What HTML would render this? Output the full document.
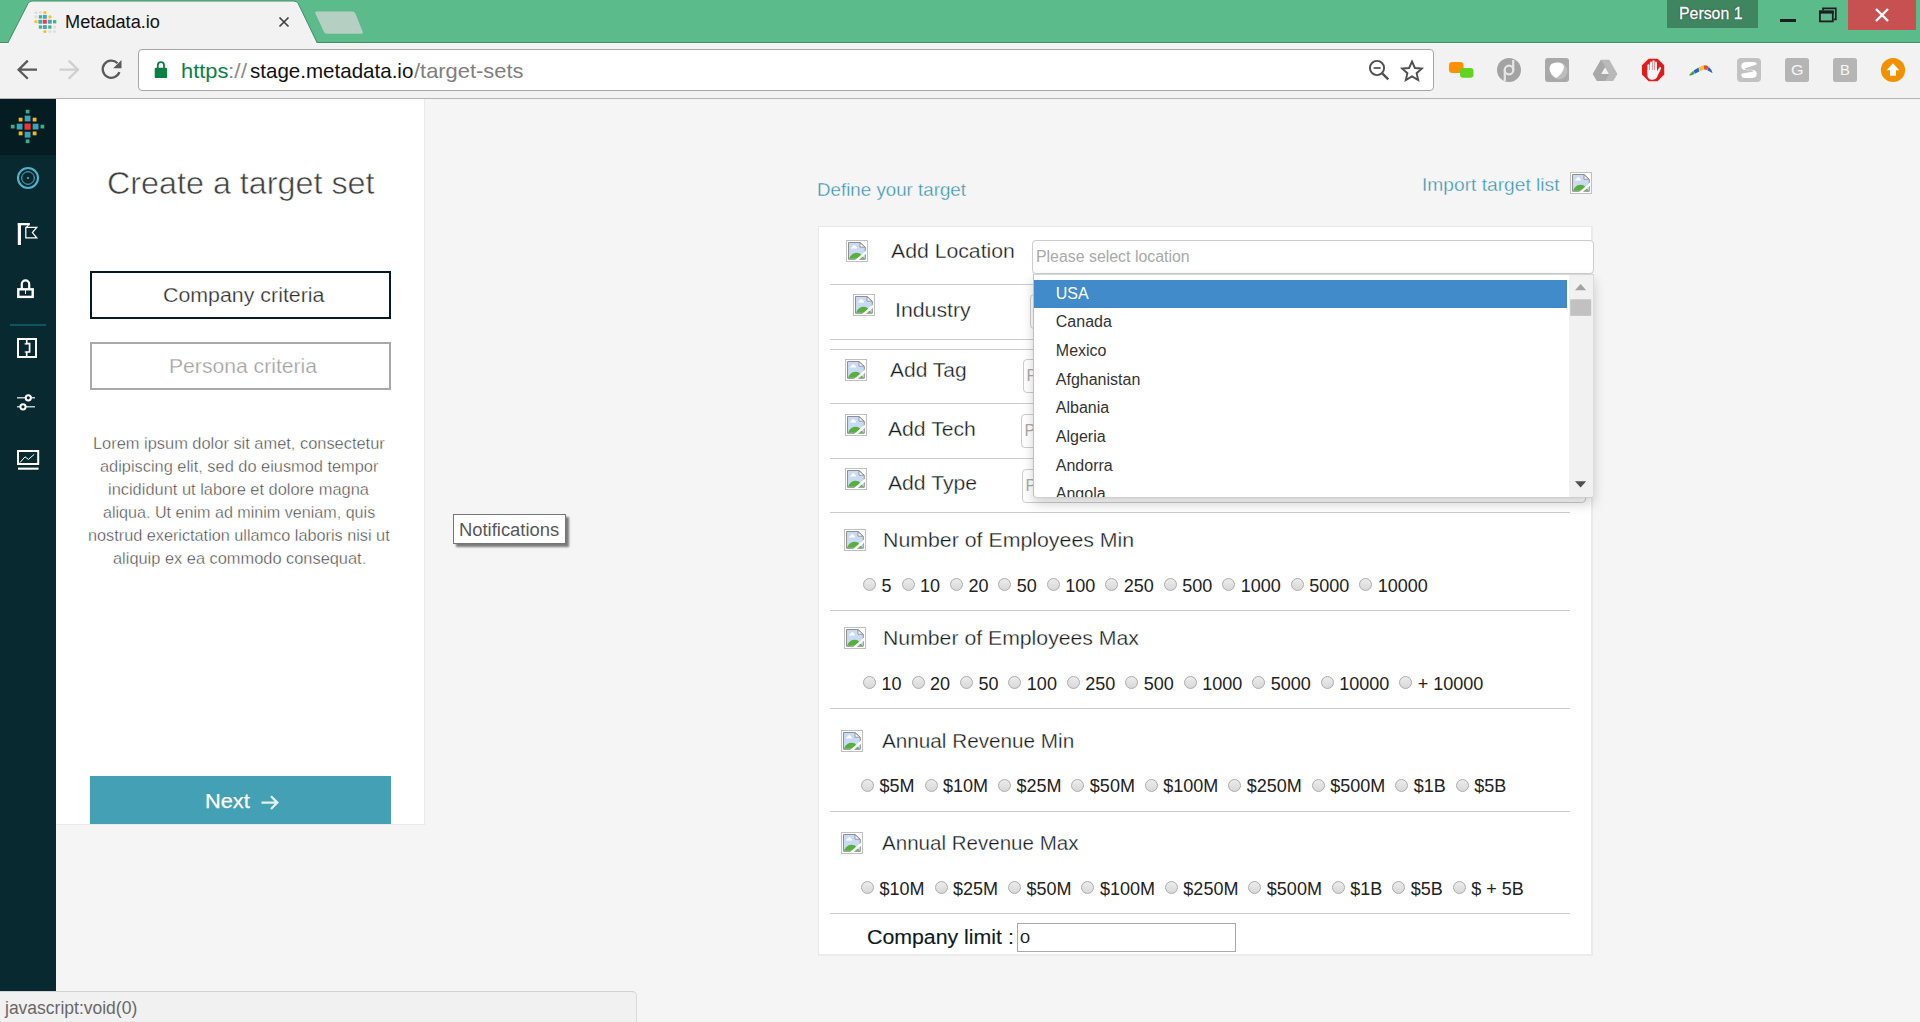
<!DOCTYPE html>
<html lang="en"><head><meta charset="utf-8"><title>Metadata.io</title>
<style>
html,body{margin:0;padding:0;overflow:hidden}
body{width:1920px;height:1022px;position:relative;overflow:hidden;background:#f5f5f5;font-family:"Liberation Sans",sans-serif;}
.a{position:absolute}
.t{position:absolute;white-space:nowrap;line-height:1;display:block;transform-origin:0 0}
svg{position:absolute;overflow:visible}
/* chrome */
#tabbar{left:0;top:0;width:1920px;height:43px;background:#5cbb8b}
#toolbar{left:0;top:43px;width:1920px;height:55px;background:#f2f2f2}
#tbline{left:0;top:98px;width:1920px;height:1px;background:#b4b4b4}
#omni{left:138px;top:49px;width:1294px;height:40px;border:1px solid #a6a6a6;border-radius:4px;background:#fff}
/* page */
#side{left:0;top:99px;width:56px;height:893px;background:#08292f}
#logo{left:0;top:99px;width:56px;height:56px;background:#051d22}
#panel{left:56px;top:99px;width:368px;height:725px;background:#fff;border-right:1px solid #e9e9e9;border-bottom:1px solid #e9e9e9}
.btn{left:90px;width:297px;height:44px;border:2px solid #041c21;background:#fff}
#card{left:818px;top:226px;width:772px;height:727px;background:#fff;border:1px solid #e8e8e8;border-right:2px solid #ebebeb;border-bottom:2px solid #ebebeb}
.hr{left:830px;width:740px;height:1px;background:#cbcbcb}
.bi{width:20px;height:20px;border:1px solid #c0c0c0;background:#fff}
.sel{height:32px;border:1px solid #ccc;border-radius:4px;background:#fff}
.rad{width:11px;height:11px;border:1px solid #acacac;border-radius:50%;background:linear-gradient(#ececec,#d8d8d8)}
.rl{position:absolute;white-space:nowrap;line-height:1;font-size:18px;color:#222}
.dd{left:1034px;top:274px;width:1558px}
.it{position:absolute;left:21.8px;white-space:nowrap;font-size:16px;line-height:1;color:#333}

</style></head>
<body>
<div class="a" id="tabbar"></div>
<div class="a" style="left:0;top:42px;width:1920px;height:1px;background:#3f8f66"></div>
<div class="a" id="toolbar"></div>
<div class="a" style="left:0;top:43px;width:1920px;height:1px;background:#fafafa"></div>
<div class="a" id="tbline"></div>
<svg style="left:0;top:0" width="400" height="44" viewBox="0 0 400 44">
<path d="M7.5 44 L28 3.5 Q29.5 1 32 1 L294 1 Q296.8 1 298.2 3.5 L317.6 44 Z" fill="#f2f2f2"/>
<path d="M7.8 43 L28 3.5 Q29.5 1 32 1 L294 1 Q296.8 1 298.2 3.5 L317.3 43" fill="none" stroke="#3f8f66" stroke-width="1"/>
<path d="M316.5 11.5 L352.5 11.5 Q354.5 11.5 355.3 13.3 L362.8 32 Q363.3 33.8 361.5 33.8 L326.5 33.8 Q324.8 33.8 324 32 L315.3 13.3 Q314.7 11.5 316.5 11.5 Z" fill="#b6cfc3"/>
<path d="M279.5 17.5 L288.5 26.5 M288.5 17.5 L279.5 26.5" stroke="#404040" stroke-width="1.7" fill="none"/>
</svg>
<svg style="left:0;top:0" width="60" height="40"><circle cx="35.9" cy="12.5" r="1.6" fill="#dedede"/><circle cx="40.4" cy="12.5" r="1.6" fill="#dedede"/><circle cx="44.9" cy="12.5" r="1.6" fill="#fdc010"/><circle cx="35.9" cy="16.9" r="1.6" fill="#dedede"/><rect x="38.8" y="15.2" width="3.3" height="3.3" fill="#3fb488"/><rect x="42.9" y="14.9" width="3.9" height="3.9" fill="#46a6c0"/><circle cx="49.9" cy="16.9" r="1.6" fill="#fdc010"/><circle cx="35.9" cy="21.7" r="1.6" fill="#fdc010"/><rect x="38.4" y="19.8" width="3.9" height="3.9" fill="#46a6c0"/><rect x="42.9" y="19.8" width="3.9" height="3.9" fill="#f73438"/><rect x="47.9" y="19.8" width="3.9" height="3.9" fill="#46a6c0"/><rect x="53.0" y="20.1" width="3.3" height="3.3" fill="#3fb488"/><rect x="38.8" y="25.4" width="3.3" height="3.3" fill="#3fb488"/><rect x="42.9" y="25.1" width="3.9" height="3.9" fill="#46a6c0"/><rect x="48.2" y="25.4" width="3.3" height="3.3" fill="#3fb488"/><circle cx="54.6" cy="27.1" r="1.6" fill="#dedede"/><circle cx="44.9" cy="31.5" r="1.6" fill="#fdc010"/><circle cx="49.9" cy="31.5" r="1.6" fill="#dedede"/><circle cx="54.6" cy="31.5" r="1.6" fill="#dedede"/></svg>
<span class="t" style="left:65.48px;top:13.00px;font-size:18px;color:#111;transform:scaleX(1.0095);">Metadata.io</span>
<div class="a" style="left:1667px;top:0;width:91px;height:28px;background:#3f8560"></div>
<span class="t" style="left:1679.06px;top:5.50px;font-size:16px;color:#fff;transform:scaleX(0.9913);-webkit-text-stroke:0.3px #fff;text-shadow:0 0 2px rgba(0,0,0,.55),0 0 1px rgba(0,0,0,.5);">Person 1</span>
<div class="a" style="left:1780px;top:19px;width:16px;height:3px;background:#1e1e1e"></div>
<svg style="left:1810px;top:0" width="40" height="30" viewBox="1810 0 40 30">
<path d="M1823 10.6 V8.3 H1835.8 V19.4 H1833.7" fill="none" stroke="#1e1e1e" stroke-width="1.7"/>
<rect x="1819.9" y="11.5" width="12.9" height="9.9" fill="none" stroke="#1e1e1e" stroke-width="1.8"/>
<rect x="1819" y="10.6" width="14.7" height="3" fill="#1e1e1e"/>
</svg>
<div class="a" style="left:1848px;top:0;width:68px;height:30px;background:#c75050"></div>
<svg style="left:1848px;top:0" width="68" height="30"><path d="M28 9 L40 21 M40 9 L28 21" stroke="#fff" stroke-width="2.4" fill="none"/></svg>
<svg style="left:0;top:43px" width="140" height="55" viewBox="0 43 140 55">
<path d="M37 69.7 H19 M27.8 60.6 L18.6 69.7 L27.8 78.8" fill="none" stroke="#5a5a5a" stroke-width="2.3"/>
<path d="M59.5 69.7 H77.5 M68.7 60.6 L77.9 69.7 L68.7 78.8" fill="none" stroke="#cfcfcf" stroke-width="2.3"/>
<path d="M117.5 63.2 A8.6 8.6 0 1 0 119.4 72.2" fill="none" stroke="#5a5a5a" stroke-width="2.3"/>
<path d="M121.5 60 V68.3 H113.2 Z" fill="#5a5a5a"/>
</svg>
<div class="a" id="omni"></div>
<svg style="left:150px;top:58px" width="24" height="24" viewBox="150 58 24 24">
<path d="M157.8 68 V65.3 A3.1 3.1 0 0 1 164 65.3 V68" fill="none" stroke="#0b8043" stroke-width="1.8"/>
<rect x="154.7" y="67.7" width="12.4" height="10.4" rx="1.2" fill="#0b8043"/>
</svg>
<span class="t" style="left:181.38px;top:60.00px;font-size:21px;color:#0b8043;transform:scaleX(1.0411);">https</span>
<span class="t" style="left:227.82px;top:60.00px;font-size:21px;color:#8c8c8c;transform:scaleX(1.0857);">://</span>
<span class="t" style="left:250.28px;top:60.00px;font-size:21px;color:#111;transform:scaleX(0.9785);">stage.metadata.io</span>
<span class="t" style="left:413.75px;top:60.00px;font-size:21px;color:#808080;transform:scaleX(1.0418);">/target-sets</span>
<svg style="left:1360px;top:52px" width="70" height="36" viewBox="1360 52 70 36">
<circle cx="1377" cy="68" r="7.1" fill="none" stroke="#505050" stroke-width="1.9"/>
<path d="M1373.6 68 H1380.6" stroke="#505050" stroke-width="1.7"/>
<path d="M1382.3 73.3 L1388.3 79.3" stroke="#505050" stroke-width="2.4"/>
<path d="M1412 61.5 L1414.9 68 L1421.8 68.6 L1416.6 73.2 L1418.2 80 L1412 76.4 L1405.8 80 L1407.4 73.2 L1402.2 68.6 L1409.1 68 Z" fill="none" stroke="#505050" stroke-width="1.9" stroke-linejoin="miter"/>
</svg>
<svg style="left:1440px;top:50px" width="480" height="40" viewBox="1440 50 480 40">
<rect x="1449" y="62" width="14.5" height="11" rx="3.2" fill="#ff8f06"/>
<rect x="1460" y="68" width="13.5" height="9.8" rx="3.2" fill="#62d321"/>
<circle cx="1509" cy="70" r="12" fill="#a3a3a3"/>
<circle cx="1509" cy="70" r="4.3" fill="none" stroke="#e6e6e6" stroke-width="2.2"/>
<path d="M1513.2 60 V70 M1504.8 70 V81" stroke="#e6e6e6" stroke-width="2.2" fill="none"/>
<rect x="1545" y="58" width="24" height="24" rx="3" fill="#a9a9a9"/>
<circle cx="1559" cy="71" r="8.5" fill="#bdbdbd"/>
<path d="M1549.5 68.5 Q1549.5 62.5 1557 62.5 Q1563.5 62.5 1564 67 Q1563 74 1556 78 Q1549.5 74 1549.5 68.5 Z" fill="#fff"/>
<path d="M1601 59.7 H1609.3 L1617.4 74 L1613.2 81 H1597 L1592.8 74 Z" fill="#b9b9b9"/>
<path d="M1601 59.7 L1609.3 74 L1605 81 H1597 L1592.8 74 Z" fill="#a8a8a8"/>
<path d="M1605.1 67.2 L1609 74 H1601.2 Z" fill="#f2f2f2"/>
<path d="M1648.6 58.7 H1657.6 L1664.2 65.3 V74.6 L1657.6 81.2 H1648.6 L1642 74.6 V65.3 Z" fill="#e41b1b"/>
<g fill="#f6f6f6"><rect x="1647.4" y="64.2" width="2.1" height="9" rx="1"/><rect x="1649.9" y="61.4" width="2.1" height="11" rx="1"/><rect x="1652.4" y="60.2" width="2.1" height="12" rx="1"/><rect x="1654.9" y="61.6" width="2.1" height="11" rx="1"/>
<path d="M1647.4 70 H1657 V71.5 L1659.2 67.6 Q1660 66.6 1660.8 67.2 Q1661.5 67.9 1660.9 69 L1657.6 75.8 Q1656.3 79.8 1652.4 79.8 Q1647.4 79.8 1647.4 75 Z"/></g>
<path d="M1689.5 76.2 L1712 65.5" stroke="none"/>
<path d="M1689 75.3 Q1691 75.8 1694.4 73.9 L1693.3 70.7 Q1690.6 72.8 1689 75.3 Z" fill="#3da44d"/>
<path d="M1693.6 70.5 L1694.8 73.7 L1699.3 71.4 L1698.5 67.4 Z" fill="#2a62c2"/>
<path d="M1698.8 67.2 L1699.6 71.2 L1703.6 69.7 L1703.2 65.6 Z" fill="#f6c21c"/>
<path d="M1703.5 65.5 L1703.9 69.6 Q1705.5 69.2 1707.2 70.2 L1708.5 66.6 Q1706 64.9 1703.5 65.5 Z" fill="#e8493a"/>
<path d="M1708.7 66.8 L1707.4 70.3 Q1710 71.8 1712.6 73.3 Q1711.5 69.2 1708.7 66.8 Z" fill="#2a62c2"/>
<rect x="1737" y="58" width="24" height="24" rx="4" fill="#c2c2c2"/>
<path d="M1756.5 64.5 Q1757.5 62 1753 62 H1746.5 Q1741.5 62 1741.3 66.2 Q1741.2 70 1746.5 70.3 H1752 Q1753.6 70.5 1753.5 71.5 L1741.5 73.8 Q1740.6 78 1745 78 H1751.5 Q1756.6 78 1756.8 73.8 Q1756.8 70 1751.5 69.7 H1746 Q1744.4 69.5 1744.5 68.5 Z" fill="#fff"/>
<rect x="1785" y="58" width="24" height="24" rx="2.5" fill="#b5b5b5"/>
<rect x="1833" y="58" width="24" height="24" rx="2.5" fill="#b5b5b5"/>
<circle cx="1893" cy="70" r="12.1" fill="#f29100"/>
<path d="M1893 63.2 L1899.3 70.2 H1896 V75.8 H1890 V70.2 H1886.7 Z" fill="#fff"/>
</svg>
<span class="t" style="left:1790.54px;top:62.00px;font-size:15px;color:#f6f6f6;transform:scaleX(1.0768);">G</span>
<span class="t" style="left:1840.14px;top:62.00px;font-size:15px;color:#f6f6f6;transform:scaleX(0.9874);">B</span>
<div class="a" id="side"></div>
<div class="a" id="logo"></div>
<svg style="left:0;top:99px" width="56" height="57" viewBox="0 99 56 57"><rect x="24.50" y="123.50" width="6.20" height="6.20" fill="#ee3338"/><rect x="16.70" y="123.70" width="5.80" height="5.80" fill="#3ea2ba"/><rect x="32.70" y="123.70" width="5.80" height="5.80" fill="#3ea2ba"/><rect x="24.70" y="115.60" width="5.80" height="5.80" fill="#3ea2ba"/><rect x="24.70" y="131.80" width="5.80" height="5.80" fill="#3ea2ba"/><rect x="18.70" y="117.70" width="3.80" height="3.80" fill="#fdb714"/><rect x="32.70" y="117.70" width="3.80" height="3.80" fill="#fdb714"/><rect x="18.70" y="131.50" width="3.80" height="3.80" fill="#fdb714"/><rect x="32.70" y="131.50" width="3.80" height="3.80" fill="#fdb714"/><rect x="10.85" y="124.75" width="3.70" height="3.70" fill="#3fae85"/><rect x="40.55" y="124.75" width="3.70" height="3.70" fill="#3fae85"/><rect x="25.75" y="109.75" width="3.70" height="3.70" fill="#3fae85"/><rect x="25.75" y="139.45" width="3.70" height="3.70" fill="#3fae85"/></svg>
<svg style="left:0;top:156px" width="56" height="340" viewBox="0 156 56 340">
<circle cx="28" cy="178" r="10" fill="none" stroke="#4fb3c9" stroke-width="2.1"/>
<circle cx="28" cy="178" r="6.3" fill="none" stroke="#4fb3c9" stroke-width="1"/>
<circle cx="28" cy="178" r="1.1" fill="#4fb3c9"/>
<!-- flag -->
<rect x="17.8" y="223" width="3.2" height="22" fill="#fff"/>
<rect x="17.8" y="223" width="12" height="2.3" fill="#fff"/>
<path d="M29.2 223.6 L26.2 228" stroke="#fff" stroke-width="1.2" fill="none"/>
<path d="M25.8 227.3 H36.8 L32.4 232.6 L36.8 237.9 H25.8 Z" fill="none" stroke="#fff" stroke-width="1.25"/>
<!-- person -->
<path d="M21.8 289 V284.1 A3.7 3.7 0 0 1 29.2 284.1 V289" fill="none" stroke="#fff" stroke-width="2.2"/>
<rect x="18.3" y="289.3" width="14.4" height="7.6" fill="none" stroke="#fff" stroke-width="2.4"/>
<path d="M25.5 289 V294" stroke="#fff" stroke-width="1"/>
<rect x="10" y="324" width="36" height="2" fill="#0f5461"/>
<!-- puzzle -->
<rect x="18" y="339" width="18" height="18" fill="none" stroke="#fff" stroke-width="2"/>
<path d="M26.7 339 V343.6 H29.6 V352 H26.7 V357" fill="none" stroke="#fff" stroke-width="1.7"/>
<path d="M24.6 343.8 H26.7 M24.6 352 H26.7" stroke="#fff" stroke-width="1.2"/>
<!-- sliders -->
<path d="M17 397.8 H35 M17 406.8 H35" stroke="#c3cbcd" stroke-width="1.5"/>
<circle cx="28.3" cy="397.8" r="2.6" fill="#07272f" stroke="#fff" stroke-width="2"/>
<circle cx="23" cy="406.8" r="2.6" fill="#07272f" stroke="#fff" stroke-width="2"/>
<!-- chart -->
<rect x="18" y="451" width="20.2" height="13" fill="none" stroke="#fff" stroke-width="2"/>
<rect x="18" y="467.6" width="20.6" height="2.1" fill="#fff"/>
<path d="M20 462.6 L25 456.8 L28.4 459.4 L34.2 454.4" fill="none" stroke="#fff" stroke-width="1"/>
</svg>
<div class="a" id="panel"></div>
<span class="t" style="left:106.69px;top:167.00px;font-size:32px;color:#404040;transform:scaleX(1.0093);-webkit-text-stroke:0.55px #fff;">Create a target set</span>
<div class="a btn" style="top:271px"></div>
<span class="t" style="left:163.00px;top:285.00px;font-size:20px;color:#303030;transform:scaleX(1.0682);-webkit-text-stroke:0.25px #fff;">Company criteria</span>
<div class="a btn" style="top:342px;border-color:#a9a9a9"></div>
<span class="t" style="left:168.65px;top:356.00px;font-size:20px;color:#a2a2a2;transform:scaleX(1.0568);-webkit-text-stroke:0.25px #fff;">Persona criteria</span>
<span class="t" style="left:92.72px;top:435.50px;font-size:16px;color:#3d3d3d;transform:scaleX(1.0253);-webkit-text-stroke:0.4px #fff;">Lorem ipsum dolor sit amet, consectetur</span>
<span class="t" style="left:99.59px;top:458.50px;font-size:16px;color:#3d3d3d;transform:scaleX(1.0229);-webkit-text-stroke:0.4px #fff;">adipiscing elit, sed do eiusmod tempor</span>
<span class="t" style="left:107.97px;top:481.50px;font-size:16px;color:#3d3d3d;transform:scaleX(1.0257);-webkit-text-stroke:0.4px #fff;">incididunt ut labore et dolore magna</span>
<span class="t" style="left:103.00px;top:504.50px;font-size:16px;color:#3d3d3d;transform:scaleX(1.0069);-webkit-text-stroke:0.4px #fff;">aliqua. Ut enim ad minim veniam, quis</span>
<span class="t" style="left:87.98px;top:527.50px;font-size:16px;color:#3d3d3d;transform:scaleX(1.0156);-webkit-text-stroke:0.4px #fff;">nostrud exerictation ullamco laboris nisi ut</span>
<span class="t" style="left:112.89px;top:550.50px;font-size:16px;color:#3d3d3d;transform:scaleX(1.0240);-webkit-text-stroke:0.4px #fff;">aliquip ex ea commodo consequat.</span>
<div class="a" style="left:90px;top:776px;width:301px;height:48px;background:#43a0b5"></div>
<span class="t" style="left:204.60px;top:791.00px;font-size:20px;color:#fff;transform:scaleX(1.0876);-webkit-text-stroke:0.25px #fff;">Next</span>
<svg style="left:258px;top:792px" width="24" height="22" viewBox="258 792 24 22">
<path d="M261.5 802.6 H277 M271 796.2 L277.4 802.6 L271 809" fill="none" stroke="#e4f1f4" stroke-width="2.2"/>
</svg>
<div class="a" style="left:453px;top:514px;width:111px;height:28px;border:1px solid #767676;background:#fff;box-shadow:3px 3px 2px rgba(0,0,0,.5)"></div>
<span class="t" style="left:458.96px;top:521.00px;font-size:18px;color:#575757;transform:scaleX(1.0211);">Notifications</span>
<span class="t" style="left:816.94px;top:181.00px;font-size:18px;color:#3191b1;transform:scaleX(1.0414);-webkit-text-stroke:0.35px #f5f5f5;">Define your target</span>
<span class="t" style="left:1422.30px;top:176.00px;font-size:18px;color:#3191b1;transform:scaleX(1.0658);-webkit-text-stroke:0.35px #f5f5f5;">Import target list</span>
<div class="a bi" style="left:1570px;top:172px"><svg style="left:1px;top:1px" width="18" height="18" viewBox="0 0 18 18"><path d="M0.5 0.5 H12 L17.3 5.2 V17.3 H0.5 Z" fill="#c9daf5" stroke="#8f8f8f" stroke-width="1"/><path d="M12 0.8 L17 5.2 H12 Z" fill="#fff" stroke="#8f8f8f" stroke-width="0.9"/><path d="M2.8 6.4 L5.6 3.3 H7 L9 5.5 V6.4 Z" fill="#fff"/><path d="M1 16.8 Q3 11.2 8.2 10.8 Q12.6 10.8 14.2 14.2 L16.8 16.8 Z" fill="#57b03a"/><path d="M6.5 18.6 L18.4 8.3 L18.4 11.4 L10.2 18.6 Z" fill="#fff"/></svg></div>
<div class="a" id="card"></div>
<div class="a hr" style="top:284px"></div>
<div class="a hr" style="top:339px"></div>
<div class="a hr" style="top:349px"></div>
<div class="a hr" style="top:403px"></div>
<div class="a hr" style="top:458px"></div>
<div class="a hr" style="top:512px"></div>
<div class="a hr" style="top:610px"></div>
<div class="a hr" style="top:708px"></div>
<div class="a hr" style="top:811px"></div>
<div class="a hr" style="top:913px"></div>
<div class="a bi" style="left:846px;top:240px"><svg style="left:1px;top:1px" width="18" height="18" viewBox="0 0 18 18"><path d="M0.5 0.5 H12 L17.3 5.2 V17.3 H0.5 Z" fill="#c9daf5" stroke="#8f8f8f" stroke-width="1"/><path d="M12 0.8 L17 5.2 H12 Z" fill="#fff" stroke="#8f8f8f" stroke-width="0.9"/><path d="M2.8 6.4 L5.6 3.3 H7 L9 5.5 V6.4 Z" fill="#fff"/><path d="M1 16.8 Q3 11.2 8.2 10.8 Q12.6 10.8 14.2 14.2 L16.8 16.8 Z" fill="#57b03a"/><path d="M6.5 18.6 L18.4 8.3 L18.4 11.4 L10.2 18.6 Z" fill="#fff"/></svg></div>
<span class="t" style="left:891.30px;top:241.00px;font-size:20px;color:#141b20;transform:scaleX(1.0611);-webkit-text-stroke:0.3px #fff;">Add Location</span>
<div class="a bi" style="left:853px;top:294px"><svg style="left:1px;top:1px" width="18" height="18" viewBox="0 0 18 18"><path d="M0.5 0.5 H12 L17.3 5.2 V17.3 H0.5 Z" fill="#c9daf5" stroke="#8f8f8f" stroke-width="1"/><path d="M12 0.8 L17 5.2 H12 Z" fill="#fff" stroke="#8f8f8f" stroke-width="0.9"/><path d="M2.8 6.4 L5.6 3.3 H7 L9 5.5 V6.4 Z" fill="#fff"/><path d="M1 16.8 Q3 11.2 8.2 10.8 Q12.6 10.8 14.2 14.2 L16.8 16.8 Z" fill="#57b03a"/><path d="M6.5 18.6 L18.4 8.3 L18.4 11.4 L10.2 18.6 Z" fill="#fff"/></svg></div>
<span class="t" style="left:894.64px;top:300.00px;font-size:20px;color:#141b20;transform:scaleX(1.0650);-webkit-text-stroke:0.3px #fff;">Industry</span>
<div class="a bi" style="left:845px;top:359px"><svg style="left:1px;top:1px" width="18" height="18" viewBox="0 0 18 18"><path d="M0.5 0.5 H12 L17.3 5.2 V17.3 H0.5 Z" fill="#c9daf5" stroke="#8f8f8f" stroke-width="1"/><path d="M12 0.8 L17 5.2 H12 Z" fill="#fff" stroke="#8f8f8f" stroke-width="0.9"/><path d="M2.8 6.4 L5.6 3.3 H7 L9 5.5 V6.4 Z" fill="#fff"/><path d="M1 16.8 Q3 11.2 8.2 10.8 Q12.6 10.8 14.2 14.2 L16.8 16.8 Z" fill="#57b03a"/><path d="M6.5 18.6 L18.4 8.3 L18.4 11.4 L10.2 18.6 Z" fill="#fff"/></svg></div>
<span class="t" style="left:890.30px;top:360.00px;font-size:20px;color:#141b20;transform:scaleX(1.0510);-webkit-text-stroke:0.3px #fff;">Add Tag</span>
<div class="a bi" style="left:845px;top:414px"><svg style="left:1px;top:1px" width="18" height="18" viewBox="0 0 18 18"><path d="M0.5 0.5 H12 L17.3 5.2 V17.3 H0.5 Z" fill="#c9daf5" stroke="#8f8f8f" stroke-width="1"/><path d="M12 0.8 L17 5.2 H12 Z" fill="#fff" stroke="#8f8f8f" stroke-width="0.9"/><path d="M2.8 6.4 L5.6 3.3 H7 L9 5.5 V6.4 Z" fill="#fff"/><path d="M1 16.8 Q3 11.2 8.2 10.8 Q12.6 10.8 14.2 14.2 L16.8 16.8 Z" fill="#57b03a"/><path d="M6.5 18.6 L18.4 8.3 L18.4 11.4 L10.2 18.6 Z" fill="#fff"/></svg></div>
<span class="t" style="left:888.10px;top:419.00px;font-size:20px;color:#141b20;transform:scaleX(1.0575);-webkit-text-stroke:0.3px #fff;">Add Tech</span>
<div class="a bi" style="left:845px;top:468px"><svg style="left:1px;top:1px" width="18" height="18" viewBox="0 0 18 18"><path d="M0.5 0.5 H12 L17.3 5.2 V17.3 H0.5 Z" fill="#c9daf5" stroke="#8f8f8f" stroke-width="1"/><path d="M12 0.8 L17 5.2 H12 Z" fill="#fff" stroke="#8f8f8f" stroke-width="0.9"/><path d="M2.8 6.4 L5.6 3.3 H7 L9 5.5 V6.4 Z" fill="#fff"/><path d="M1 16.8 Q3 11.2 8.2 10.8 Q12.6 10.8 14.2 14.2 L16.8 16.8 Z" fill="#57b03a"/><path d="M6.5 18.6 L18.4 8.3 L18.4 11.4 L10.2 18.6 Z" fill="#fff"/></svg></div>
<span class="t" style="left:888.10px;top:473.00px;font-size:20px;color:#141b20;transform:scaleX(1.0575);-webkit-text-stroke:0.3px #fff;">Add Type</span>
<div class="a bi" style="left:844px;top:529px"><svg style="left:1px;top:1px" width="18" height="18" viewBox="0 0 18 18"><path d="M0.5 0.5 H12 L17.3 5.2 V17.3 H0.5 Z" fill="#c9daf5" stroke="#8f8f8f" stroke-width="1"/><path d="M12 0.8 L17 5.2 H12 Z" fill="#fff" stroke="#8f8f8f" stroke-width="0.9"/><path d="M2.8 6.4 L5.6 3.3 H7 L9 5.5 V6.4 Z" fill="#fff"/><path d="M1 16.8 Q3 11.2 8.2 10.8 Q12.6 10.8 14.2 14.2 L16.8 16.8 Z" fill="#57b03a"/><path d="M6.5 18.6 L18.4 8.3 L18.4 11.4 L10.2 18.6 Z" fill="#fff"/></svg></div>
<span class="t" style="left:883.33px;top:530.00px;font-size:20px;color:#141b20;transform:scaleX(1.0659);-webkit-text-stroke:0.3px #fff;">Number of Employees Min</span>
<div class="a bi" style="left:844px;top:627px"><svg style="left:1px;top:1px" width="18" height="18" viewBox="0 0 18 18"><path d="M0.5 0.5 H12 L17.3 5.2 V17.3 H0.5 Z" fill="#c9daf5" stroke="#8f8f8f" stroke-width="1"/><path d="M12 0.8 L17 5.2 H12 Z" fill="#fff" stroke="#8f8f8f" stroke-width="0.9"/><path d="M2.8 6.4 L5.6 3.3 H7 L9 5.5 V6.4 Z" fill="#fff"/><path d="M1 16.8 Q3 11.2 8.2 10.8 Q12.6 10.8 14.2 14.2 L16.8 16.8 Z" fill="#57b03a"/><path d="M6.5 18.6 L18.4 8.3 L18.4 11.4 L10.2 18.6 Z" fill="#fff"/></svg></div>
<span class="t" style="left:883.34px;top:628.00px;font-size:20px;color:#141b20;transform:scaleX(1.0612);-webkit-text-stroke:0.3px #fff;">Number of Employees Max</span>
<div class="a bi" style="left:841px;top:730px"><svg style="left:1px;top:1px" width="18" height="18" viewBox="0 0 18 18"><path d="M0.5 0.5 H12 L17.3 5.2 V17.3 H0.5 Z" fill="#c9daf5" stroke="#8f8f8f" stroke-width="1"/><path d="M12 0.8 L17 5.2 H12 Z" fill="#fff" stroke="#8f8f8f" stroke-width="0.9"/><path d="M2.8 6.4 L5.6 3.3 H7 L9 5.5 V6.4 Z" fill="#fff"/><path d="M1 16.8 Q3 11.2 8.2 10.8 Q12.6 10.8 14.2 14.2 L16.8 16.8 Z" fill="#57b03a"/><path d="M6.5 18.6 L18.4 8.3 L18.4 11.4 L10.2 18.6 Z" fill="#fff"/></svg></div>
<span class="t" style="left:882.30px;top:731.00px;font-size:20px;color:#141b20;transform:scaleX(1.0349);-webkit-text-stroke:0.3px #fff;">Annual Revenue Min</span>
<div class="a bi" style="left:841px;top:832px"><svg style="left:1px;top:1px" width="18" height="18" viewBox="0 0 18 18"><path d="M0.5 0.5 H12 L17.3 5.2 V17.3 H0.5 Z" fill="#c9daf5" stroke="#8f8f8f" stroke-width="1"/><path d="M12 0.8 L17 5.2 H12 Z" fill="#fff" stroke="#8f8f8f" stroke-width="0.9"/><path d="M2.8 6.4 L5.6 3.3 H7 L9 5.5 V6.4 Z" fill="#fff"/><path d="M1 16.8 Q3 11.2 8.2 10.8 Q12.6 10.8 14.2 14.2 L16.8 16.8 Z" fill="#57b03a"/><path d="M6.5 18.6 L18.4 8.3 L18.4 11.4 L10.2 18.6 Z" fill="#fff"/></svg></div>
<span class="t" style="left:882.30px;top:833.00px;font-size:20px;color:#141b20;transform:scaleX(1.0276);-webkit-text-stroke:0.3px #fff;">Annual Revenue Max</span>
<div class="a sel" style="left:1032px;top:240px;width:560px;height:32px"></div>
<span class="t" style="left:1035.66px;top:248.50px;font-size:16px;color:#a9a9a9;transform:scaleX(0.9927);">Please select location</span>
<div class="a sel" style="left:1030px;top:294px;width:554px;height:33px"></div>
<span class="t" style="left:1033.25px;top:303.50px;font-size:16px;color:#a9a9a9;">Please select industry</span>
<div class="a sel" style="left:1023px;top:359px;width:561px;height:32px"></div>
<span class="t" style="left:1026.45px;top:367.50px;font-size:16px;color:#a9a9a9;">Please select tag</span>
<div class="a sel" style="left:1021px;top:414px;width:563px;height:32px"></div>
<span class="t" style="left:1024.45px;top:422.50px;font-size:16px;color:#a9a9a9;">Please select tech</span>
<div class="a sel" style="left:1022px;top:469px;width:562px;height:32px"></div>
<span class="t" style="left:1025.45px;top:477.50px;font-size:16px;color:#a9a9a9;">Please select type</span>
<div class="a rad" style="left:863.0px;top:578px"></div>
<span class="rl" style="left:881.45px;top:577.00px">5</span>
<div class="a rad" style="left:901.5px;top:578px"></div>
<span class="rl" style="left:919.91px;top:577.00px">10</span>
<div class="a rad" style="left:949.9px;top:578px"></div>
<span class="rl" style="left:968.38px;top:577.00px">20</span>
<div class="a rad" style="left:998.4px;top:578px"></div>
<span class="rl" style="left:1016.85px;top:577.00px">50</span>
<div class="a rad" style="left:1046.9px;top:578px"></div>
<span class="rl" style="left:1065.33px;top:577.00px">100</span>
<div class="a rad" style="left:1105.4px;top:578px"></div>
<span class="rl" style="left:1123.81px;top:577.00px">250</span>
<div class="a rad" style="left:1163.8px;top:578px"></div>
<span class="rl" style="left:1182.29px;top:577.00px">500</span>
<div class="a rad" style="left:1222.3px;top:578px"></div>
<span class="rl" style="left:1240.77px;top:577.00px">1000</span>
<div class="a rad" style="left:1290.8px;top:578px"></div>
<span class="rl" style="left:1309.26px;top:577.00px">5000</span>
<div class="a rad" style="left:1359.3px;top:578px"></div>
<span class="rl" style="left:1377.76px;top:577.00px">10000</span>
<div class="a rad" style="left:863.0px;top:676px"></div>
<span class="rl" style="left:881.45px;top:675.00px">10</span>
<div class="a rad" style="left:911.5px;top:676px"></div>
<span class="rl" style="left:929.92px;top:675.00px">20</span>
<div class="a rad" style="left:959.9px;top:676px"></div>
<span class="rl" style="left:978.39px;top:675.00px">50</span>
<div class="a rad" style="left:1008.4px;top:676px"></div>
<span class="rl" style="left:1026.86px;top:675.00px">100</span>
<div class="a rad" style="left:1066.9px;top:676px"></div>
<span class="rl" style="left:1085.35px;top:675.00px">250</span>
<div class="a rad" style="left:1125.4px;top:676px"></div>
<span class="rl" style="left:1143.83px;top:675.00px">500</span>
<div class="a rad" style="left:1183.9px;top:676px"></div>
<span class="rl" style="left:1202.31px;top:675.00px">1000</span>
<div class="a rad" style="left:1252.4px;top:676px"></div>
<span class="rl" style="left:1270.80px;top:675.00px">5000</span>
<div class="a rad" style="left:1320.8px;top:676px"></div>
<span class="rl" style="left:1339.30px;top:675.00px">10000</span>
<div class="a rad" style="left:1399.4px;top:676px"></div>
<span class="rl" style="left:1417.80px;top:675.00px">+ 10000</span>
<div class="a rad" style="left:861.0px;top:779px"></div>
<span class="rl" style="left:879.45px;top:777.00px">$5M</span>
<div class="a rad" style="left:924.5px;top:779px"></div>
<span class="rl" style="left:942.92px;top:777.00px">$10M</span>
<div class="a rad" style="left:997.9px;top:779px"></div>
<span class="rl" style="left:1016.39px;top:777.00px">$25M</span>
<div class="a rad" style="left:1071.4px;top:779px"></div>
<span class="rl" style="left:1089.87px;top:777.00px">$50M</span>
<div class="a rad" style="left:1144.9px;top:779px"></div>
<span class="rl" style="left:1163.34px;top:777.00px">$100M</span>
<div class="a rad" style="left:1228.4px;top:779px"></div>
<span class="rl" style="left:1246.83px;top:777.00px">$250M</span>
<div class="a rad" style="left:1311.9px;top:779px"></div>
<span class="rl" style="left:1330.32px;top:777.00px">$500M</span>
<div class="a rad" style="left:1395.4px;top:779px"></div>
<span class="rl" style="left:1413.81px;top:777.00px">$1B</span>
<div class="a rad" style="left:1455.8px;top:779px"></div>
<span class="rl" style="left:1474.28px;top:777.00px">$5B</span>
<div class="a rad" style="left:861.0px;top:881px"></div>
<span class="rl" style="left:879.45px;top:880.00px">$10M</span>
<div class="a rad" style="left:934.5px;top:881px"></div>
<span class="rl" style="left:952.93px;top:880.00px">$25M</span>
<div class="a rad" style="left:1008.0px;top:881px"></div>
<span class="rl" style="left:1026.40px;top:880.00px">$50M</span>
<div class="a rad" style="left:1081.4px;top:881px"></div>
<span class="rl" style="left:1099.88px;top:880.00px">$100M</span>
<div class="a rad" style="left:1164.9px;top:881px"></div>
<span class="rl" style="left:1183.37px;top:880.00px">$250M</span>
<div class="a rad" style="left:1248.4px;top:881px"></div>
<span class="rl" style="left:1266.85px;top:880.00px">$500M</span>
<div class="a rad" style="left:1331.9px;top:881px"></div>
<span class="rl" style="left:1350.34px;top:880.00px">$1B</span>
<div class="a rad" style="left:1392.4px;top:881px"></div>
<span class="rl" style="left:1410.82px;top:880.00px">$5B</span>
<div class="a rad" style="left:1452.8px;top:881px"></div>
<span class="rl" style="left:1471.30px;top:880.00px">$ + 5B</span>
<span class="t" style="left:866.80px;top:927.00px;font-size:20px;color:#0a1a1e;transform:scaleX(1.0654);-webkit-text-stroke:0.12px #0a1a1e;">Company limit :</span>
<div class="a" style="left:1017px;top:923px;width:217px;height:27px;border:1px solid #a9a9a9;background:#fff"></div>
<span class="t" style="left:1020px;top:931px;font-size:14.5px;color:#222;transform:scaleX(1.25)">0</span>
<div class="a" style="left:1033px;top:274px;width:559px;height:222px;background:#fff;border:1px solid #cdcdcd;border-top-color:#d6d6d6;border-right-color:#dcdcdc;border-left-color:#bebebe;border-radius:0 0 4px 4px;box-shadow:0 6px 12px rgba(0,0,0,.175);overflow:hidden"><div class="a" style="left:0;top:5px;width:533px;height:27.7px;background:#428bca"></div><span class="it" style="top:10.50px;color:#fff;">USA</span><span class="it" style="top:38.50px;">Canada</span><span class="it" style="top:67.50px;">Mexico</span><span class="it" style="top:96.50px;">Afghanistan</span><span class="it" style="top:124.50px;">Albania</span><span class="it" style="top:153.50px;">Algeria</span><span class="it" style="top:182.50px;">Andorra</span><span class="it" style="top:210.50px;">Angola</span><div class="a" style="left:534.5px;top:0;width:25px;height:222px;background:#f1f1f1"></div><svg style="left:534.9px;top:0" width="25" height="222"><path d="M6 15.2 L11.6 9 L17.2 15.2 Z" fill="#a3a3a3"/><rect x="1.2" y="24.3" width="21" height="16.6" fill="#c1c1c1"/><path d="M6 206.2 L17.2 206.2 L11.6 212.4 Z" fill="#505050"/></svg></div>
<div class="a" style="left:0;top:991px;width:636px;height:30px;background:#f1f1f1;border-top:1px solid #d2d2d2;border-right:1px solid #dadada;border-top-right-radius:5px"></div>
<span class="t" style="left:4.95px;top:999.00px;font-size:18px;color:#686868;transform:scaleX(0.9718);">javascript:void(0)</span>
</body></html>
